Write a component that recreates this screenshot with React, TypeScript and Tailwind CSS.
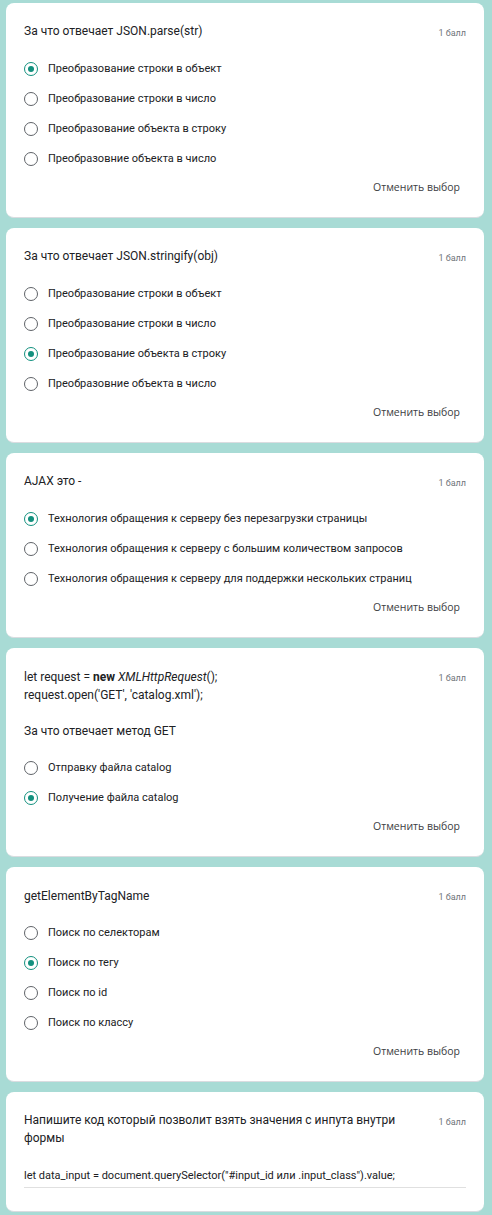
import React from "react";

type Q = {
  title: React.ReactNode;
  options: string[];
  checked: number;
  tall?: boolean;
};

const Radio = ({ on }: { on: boolean }) =>
  on ? (
    <span className="flex h-[14px] w-[14px] shrink-0 items-center justify-center rounded-full border-[1.5px] border-[#12907e]">
      <span className="h-[6px] w-[6px] rounded-full bg-[#12907e]" />
    </span>
  ) : (
    <span className="h-[14px] w-[14px] shrink-0 rounded-full border-[1.5px] border-[#5f6368]" />
  );

const Points = () => (
  <span className="mt-[2px] shrink-0 text-[9px] leading-[18px] text-[#70757a]">1 балл</span>
);

const Card = ({ q }: { q: Q }) => (
  <div className="w-[478px] rounded-[8px] border-b border-[#dadce0] bg-white px-[18px] pt-[19px] pb-[23px]">
    <div className="flex items-start justify-between gap-4">
      <div className={q.tall ? "my-[1px] text-[12px] leading-[18px] text-[#202124]" : "text-[12px] leading-[18px] text-[#202124]"}>
        {q.title}
      </div>
      <Points />
    </div>
    <div className="mt-[12px] flex flex-col">
      {q.options.map((o, i) => (
        <div key={i} className="flex h-[30px] items-center gap-[10px]">
          <Radio on={i === q.checked} />
          <span className="text-[11px] text-[#202124]">{o}</span>
        </div>
      ))}
    </div>
    <div className="flex justify-end pr-[6px] pt-[6px]">
      <span
        className="text-[10.5px] leading-[14px] text-[#3c4043]"
        style={{ fontFamily: "'Open Sans', sans-serif" }}
      >
        Отменить выбор
      </span>
    </div>
  </div>
);

const qs: Q[] = [
  {
    title: "За что отвечает JSON.parse(str)",
    options: [
      "Преобразование строки в объект",
      "Преобразование строки в число",
      "Преобразование объекта в строку",
      "Преобразовние объекта в число",
    ],
    checked: 0,
  },
  {
    title: "За что отвечает JSON.stringify(obj)",
    options: [
      "Преобразование строки в объект",
      "Преобразование строки в число",
      "Преобразование объекта в строку",
      "Преобразовние объекта в число",
    ],
    checked: 2,
  },
  {
    title: "AJAX это -",
    options: [
      "Технология обращения к серверу без перезагрузки страницы",
      "Технология обращения к серверу с большим количеством запросов",
      "Технология обращения к серверу для поддержки нескольких страниц",
    ],
    checked: 0,
  },
  {
    title: (
      <>
        let request = <b>new</b> <i>XMLHttpRequest</i>();
        <br />
        request.open('GET', 'catalog.xml');
        <br />
        <br />
        За что отвечает метод GET
      </>
    ),
    options: ["Отправку файла catalog", "Получение файла catalog"],
    checked: 1,
    tall: true,
  },
  {
    title: "getElementByTagName",
    options: ["Поиск по селекторам", "Поиск по тегу", "Поиск по id", "Поиск по классу"],
    checked: 1,
    tall: true,
  },
];

export default function App() {
  return (
    <div
      className="min-h-[1215px] bg-[#a8dbd5] pl-[6px] pt-[3px]"
      style={{ fontFamily: "Roboto, 'Noto Sans', sans-serif" }}
    >
      <div className="flex flex-col gap-[10px]">
        {qs.map((q, i) => (
          <Card key={i} q={q} />
        ))}
        <div className="w-[478px] rounded-[8px] border-b border-[#dadce0] bg-white px-[18px] pt-[19px] pb-[23px]">
          <div className="flex items-start justify-between gap-4">
            <div className="text-[12px] leading-[18px] text-[#202124]">
              Напишите код который позволит взять значения с инпута внутри формы
            </div>
            <Points />
          </div>
          <div className="mt-[21px] border-b border-[#e0e0e0] pb-[3px] text-[11px] leading-[16px] text-[#202124]">
            let data_input = document.querySelector("#input_id или .input_class").value;
          </div>
        </div>
      </div>
    </div>
  );
}
